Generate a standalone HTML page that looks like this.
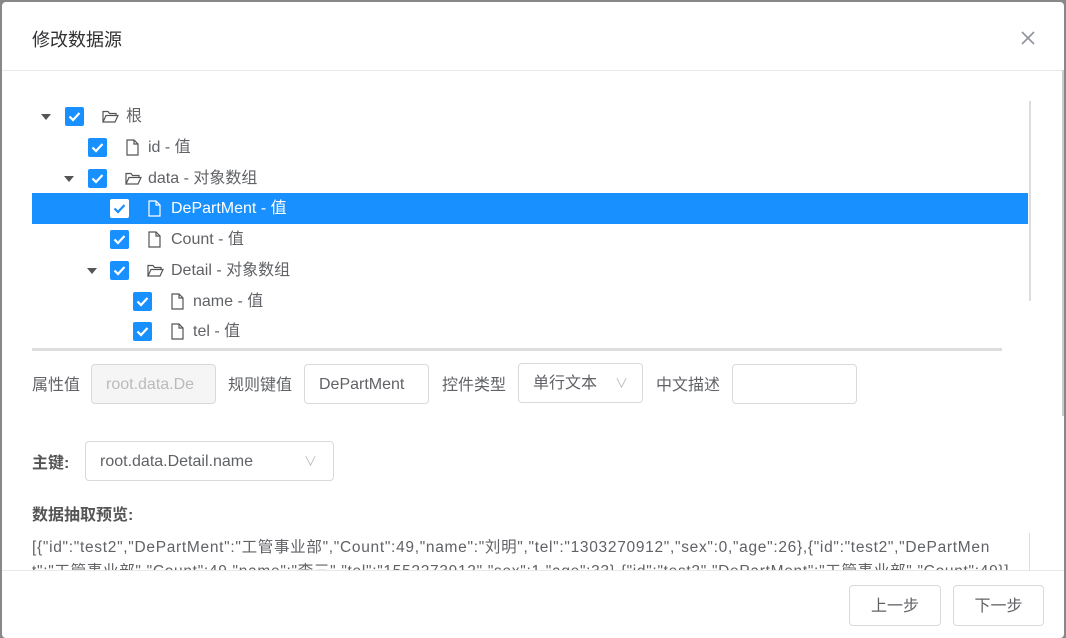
<!DOCTYPE html>
<html><head><meta charset="utf-8"><style>
*{margin:0;padding:0;box-sizing:border-box}
body{width:1066px;height:638px;overflow:hidden;background:#888;font-family:"Liberation Sans","Noto Sans CJK SC",sans-serif;color:#606266;font-size:16px;position:relative}
.modal{position:absolute;left:2px;top:2px;width:1062px;height:636px;background:#fff;border-radius:4px;overflow:hidden}
.abs{position:absolute}
.title{left:30px;top:24px;font-size:18px;color:#303133}
.hline{left:0;width:1062px;height:1px;background:#e8e8e8}
.row{position:absolute;left:30px;width:996px;height:31px;line-height:31px;font-size:16px;color:#606266}
.row.sel{background:#1890ff;color:#fff}
.cb{position:absolute;top:6px;width:19px;height:19px;background:#1890ff;border-radius:2px}
.cb svg{position:absolute;left:3px;top:4px}
.sel .cb{background:#fff}
.tri{position:absolute;top:13px;width:0;height:0;border-left:5px solid transparent;border-right:5px solid transparent;border-top:6px solid #555}
.ic{position:absolute;top:7px}
.tx{position:absolute;top:0;white-space:nowrap}
.lbl{font-size:16px;color:#606266;white-space:nowrap}
.inp{border:1px solid #d9d9d9;border-radius:4px;height:40px;line-height:40px;padding-left:14px;white-space:nowrap;overflow:hidden;color:#606266}
.arr{position:absolute;right:14px;top:0;color:#bbb;font-size:13px}
.btn{border:1px solid #d9d9d9;border-radius:4px;height:41px;line-height:41px;text-align:center;color:#606266}
</style></head><body>
<div class="modal">
<div class="abs title">修改数据源</div>
<svg class="abs" style="left:1019px;top:29px" width="14" height="14"><path d="M1 1L13 13M13 1L1 13" stroke="#909399" stroke-width="1.6"/></svg>
<div class="abs hline" style="top:68px"></div>

<div class="row" style="top:99px"><div class="tri" style="left:9px"></div><div class="cb" style="left:33px"><svg width="13" height="11"><path d="M1.5 5.5L5 9L11.5 2" stroke="#fff" stroke-width="2.2" fill="none"/></svg></div>
<svg class="ic" style="left:70px;top:9px" width="17" height="14"><path d="M1 12V1.5h5l1.5 2H14v2.5M1 12l3-6.5h12l-3 6.5z" fill="none" stroke="#555" stroke-width="1.2"/></svg><span class="tx" style="left:94px">根</span></div>

<div class="row" style="top:130px"><div class="cb" style="left:56px"><svg width="13" height="11"><path d="M1.5 5.5L5 9L11.5 2" stroke="#fff" stroke-width="2.2" fill="none"/></svg></div>
<svg class="ic" style="left:94px" width="13" height="17"><path d="M1 1h7l4 4v11H1z M8 1v4h4" fill="none" stroke="#555" stroke-width="1.2"/></svg><span class="tx" style="left:116px">id - 值</span></div>

<div class="row" style="top:161px"><div class="tri" style="left:32px"></div><div class="cb" style="left:56px"><svg width="13" height="11"><path d="M1.5 5.5L5 9L11.5 2" stroke="#fff" stroke-width="2.2" fill="none"/></svg></div>
<svg class="ic" style="left:93px;top:9px" width="17" height="14"><path d="M1 12V1.5h5l1.5 2H14v2.5M1 12l3-6.5h12l-3 6.5z" fill="none" stroke="#555" stroke-width="1.2"/></svg><span class="tx" style="left:116px">data - 对象数组</span></div>

<div class="row sel" style="top:191px"><div class="cb" style="left:78px"><svg width="13" height="11"><path d="M1.5 5.5L5 9L11.5 2" stroke="#1890ff" stroke-width="2.2" fill="none"/></svg></div>
<svg class="ic" style="left:116px" width="13" height="17"><path d="M1 1h7l4 4v11H1z M8 1v4h4" fill="none" stroke="#fff" stroke-width="1.2"/></svg><span class="tx" style="left:139px">DePartMent - 值</span></div>

<div class="row" style="top:222px"><div class="cb" style="left:78px"><svg width="13" height="11"><path d="M1.5 5.5L5 9L11.5 2" stroke="#fff" stroke-width="2.2" fill="none"/></svg></div>
<svg class="ic" style="left:116px" width="13" height="17"><path d="M1 1h7l4 4v11H1z M8 1v4h4" fill="none" stroke="#555" stroke-width="1.2"/></svg><span class="tx" style="left:139px">Count - 值</span></div>

<div class="row" style="top:253px"><div class="tri" style="left:55px"></div><div class="cb" style="left:78px"><svg width="13" height="11"><path d="M1.5 5.5L5 9L11.5 2" stroke="#fff" stroke-width="2.2" fill="none"/></svg></div>
<svg class="ic" style="left:115px;top:9px" width="17" height="14"><path d="M1 12V1.5h5l1.5 2H14v2.5M1 12l3-6.5h12l-3 6.5z" fill="none" stroke="#555" stroke-width="1.2"/></svg><span class="tx" style="left:139px">Detail - 对象数组</span></div>

<div class="row" style="top:284px"><div class="cb" style="left:101px"><svg width="13" height="11"><path d="M1.5 5.5L5 9L11.5 2" stroke="#fff" stroke-width="2.2" fill="none"/></svg></div>
<svg class="ic" style="left:139px" width="13" height="17"><path d="M1 1h7l4 4v11H1z M8 1v4h4" fill="none" stroke="#555" stroke-width="1.2"/></svg><span class="tx" style="left:161px">name - 值</span></div>

<div class="row" style="top:314px"><div class="cb" style="left:101px"><svg width="13" height="11"><path d="M1.5 5.5L5 9L11.5 2" stroke="#fff" stroke-width="2.2" fill="none"/></svg></div>
<svg class="ic" style="left:139px" width="13" height="17"><path d="M1 1h7l4 4v11H1z M8 1v4h4" fill="none" stroke="#555" stroke-width="1.2"/></svg><span class="tx" style="left:161px">tel - 值</span></div>

<div class="abs" style="left:1027px;top:99px;width:2px;height:200px;background:#ddd"></div>
<div class="abs" style="left:30px;top:346px;width:970px;height:3px;background:#ddd"></div>
<div class="abs" style="left:1060px;top:68px;width:2px;height:346px;background:#ccc"></div>

<div class="abs lbl" style="left:30px;top:369px">属性值</div>
<div class="abs inp" style="left:89px;top:362px;width:125px;background:#f5f5f5;color:#bbb">root.data.De</div>
<div class="abs lbl" style="left:226px;top:369px">规则键值</div>
<div class="abs inp" style="left:302px;top:362px;width:125px">DePartMent</div>
<div class="abs lbl" style="left:440px;top:369px">控件类型</div>
<div class="abs inp" style="left:516px;top:361px;width:125px">单行文本<span class="arr">∨</span></div>
<div class="abs lbl" style="left:654px;top:369px">中文描述</div>
<div class="abs inp" style="left:730px;top:362px;width:125px"></div>

<div class="abs lbl" style="left:30px;top:447px;font-weight:bold;color:#555">主键:</div>
<div class="abs inp" style="left:83px;top:439px;width:249px">root.data.Detail.name<span class="arr" style="right:16px">∨</span></div>

<div class="abs lbl" style="left:30px;top:499px;font-weight:bold;color:#555">数据抽取预览:</div>
<div class="abs" style="left:30px;top:534px;width:996px;height:34px;overflow:hidden;line-height:24px;font-size:15.5px;word-break:break-all;letter-spacing:0.7px">[{"id":"test2","DePartMent":"工管事业部","Count":49,"name":"刘明","tel":"1303270912","sex":0,"age":26},{"id":"test2","DePartMent":"工管事业部","Count":49,"name":"李三","tel":"1552273912","sex":1,"age":33},{"id":"test2","DePartMent":"工管事业部","Count":49}]</div>
<div class="abs" style="left:1027px;top:531px;width:1px;height:37px;background:#ddd"></div>
<div class="abs hline" style="top:568px"></div>

<div class="abs btn" style="left:847px;top:583px;width:92px">上一步</div>
<div class="abs btn" style="left:951px;top:583px;width:91px">下一步</div>
</div>
</body></html>
